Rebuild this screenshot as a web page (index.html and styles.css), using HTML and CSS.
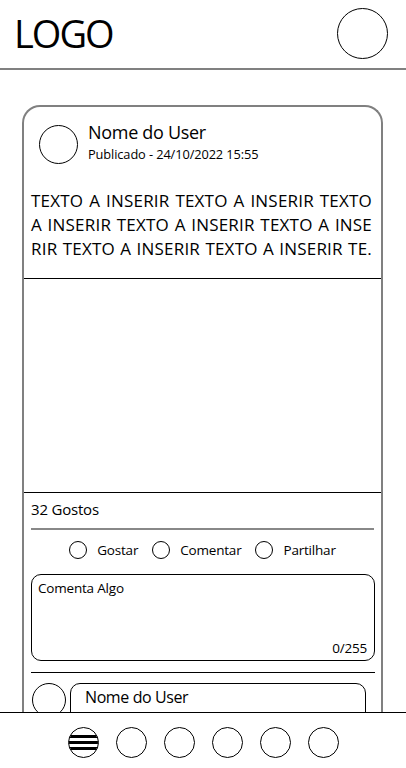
FILE: index.html
```html
<!DOCTYPE html>
<html lang="pt">
<head>
<meta charset="utf-8">
<title>Feed</title>
<link rel="stylesheet" href="styles.css">
</head>
<body>
<header class="topbar">
  <div class="logo">LOGO</div>
  <div class="profile-circle"></div>
</header>
<main class="feed">
  <article class="post">
    <div class="post-head">
      <div class="avatar"></div>
      <div class="meta">
        <div class="user-name">Nome do User</div>
        <div class="published">Publicado - 24/10/2022 15:55</div>
      </div>
    </div>
    <div class="post-text">
      <div class="line">TEXTO A INSERIR TEXTO A INSERIR TEXTO</div>
      <div class="line">A INSERIR TEXTO A INSERIR TEXTO A INSE</div>
      <div class="line">RIR TEXTO A INSERIR TEXTO A INSERIR TE.</div>
    </div>
    <div class="post-media"></div>
    <div class="likes">32 Gostos</div>
    <div class="actions">
      <div class="action"><span class="dot"></span>Gostar</div>
      <div class="action"><span class="dot"></span>Comentar</div>
      <div class="action"><span class="dot"></span>Partilhar</div>
    </div>
    <div class="comment-box">
      <div class="placeholder">Comenta Algo</div>
      <div class="counter">0/255</div>
    </div>
    <div class="comment">
      <div class="c-avatar"></div>
      <div class="c-bubble">Nome do User</div>
    </div>
  </article>
</main>
<nav class="bottom-nav">
  <div class="nav-icon menu"><span></span><span></span><span></span></div>
  <div class="nav-icon"></div>
  <div class="nav-icon"></div>
  <div class="nav-icon"></div>
  <div class="nav-icon"></div>
  <div class="nav-icon"></div>
</nav>
</body>
</html>
```
FILE: styles.css
```css
* { box-sizing: border-box; }
html, body { margin: 0; padding: 0; background: #fff; }
body {
  font-family: "Open Sans", "Noto Sans", sans-serif;
  color: #000;
  height: 768px;
  overflow: hidden;
}
.topbar {
  height: 70px;
  border-bottom: 2px solid #808080;
  display: flex;
  align-items: center;
  justify-content: space-between;
  padding: 0 18px 2px 14px;
}
.logo {
  font-size: 38px;
  letter-spacing: -2px;
  line-height: 1;
}
.profile-circle {
  width: 51px;
  height: 51px;
  border: 1px solid #000;
  border-radius: 50%;
}
.feed {
  padding: 35px 0 0 22px;
}
.post {
  width: 361px;
  height: 700px;
  border: 2px solid #808080;
  border-bottom: none;
  border-radius: 18px 18px 0 0;
}
.post-head {
  display: flex;
  align-items: flex-start;
  padding: 18px 0 0 15px;
  gap: 10px;
}
.avatar {
  width: 39px;
  height: 39px;
  border: 1.5px solid #000;
  border-radius: 50%;
  flex: none;
}
.user-name {
  font-size: 18px;
  letter-spacing: -0.3px;
  line-height: 22px;
  margin-top: -4px;
}
.published {
  font-size: 12.8px;
  letter-spacing: -0.1px;
  line-height: 16px;
  margin-top: 3px;
}
.post-text {
  padding: 25px 9px 0 7px;
  height: 115px;
  border-bottom: 1px solid #000;
  font-size: 17px;
  line-height: 24px;
  letter-spacing: 0.2px;
}
.line {
  text-align: justify;
  text-align-last: justify;
}
.post-media {
  height: 214px;
  border-bottom: 1px solid #000;
}
.likes {
  margin: 0 7px;
  height: 37px;
  border-bottom: 2px solid #888;
  font-size: 15px;
  letter-spacing: -0.2px;
  line-height: 32px;
}
.actions {
  display: flex;
  justify-content: center;
  gap: 14px;
  height: 40px;
  align-items: center;
  font-size: 13.5px;
  letter-spacing: -0.2px;
}
.action {
  display: flex;
  align-items: center;
  gap: 10px;
}
.dot {
  width: 18px;
  height: 18px;
  border: 1.5px solid #000;
  border-radius: 50%;
}
.comment-box {
  margin: 4px 6px 0 7px;
  height: 87px;
  border: 1px solid #000;
  border-radius: 10px;
  padding: 5px 7px 3px 6px;
  display: flex;
  flex-direction: column;
  justify-content: space-between;
  font-size: 13.5px;
  letter-spacing: -0.2px;
  line-height: 17px;
}
.counter { text-align: right; }
.comment {
  margin: 11px 6px 0 7px;
  border-top: 1px solid #000;
  padding-top: 10px;
  display: flex;
  gap: 4px;
}
.c-avatar {
  width: 34px;
  height: 34px;
  border: 1.5px solid #000;
  border-radius: 50%;
  margin-left: 1px;
  flex: none;
}
.c-bubble {
  width: 296px;
  height: 60px;
  border: 1px solid #000;
  border-radius: 10px;
  padding: 1px 14px;
  font-size: 16px;
  letter-spacing: -0.4px;
  line-height: 24px;
}
.bottom-nav {
  position: fixed;
  left: 0;
  right: 0;
  top: 712px;
  bottom: 0;
  background: #fff;
  border-top: 1px solid #000;
  display: flex;
  justify-content: center;
  align-items: flex-start;
  gap: 17px;
  padding-top: 14px;
}
.nav-icon {
  width: 31px;
  height: 31px;
  border: 1.5px solid #000;
  border-radius: 50%;
  flex: none;
}
.nav-icon.menu {
  display: flex;
  flex-direction: column;
  justify-content: center;
  gap: 3px;
  overflow: hidden;
}
.nav-icon.menu span {
  display: block;
  height: 3px;
  background: #000;
}
```
